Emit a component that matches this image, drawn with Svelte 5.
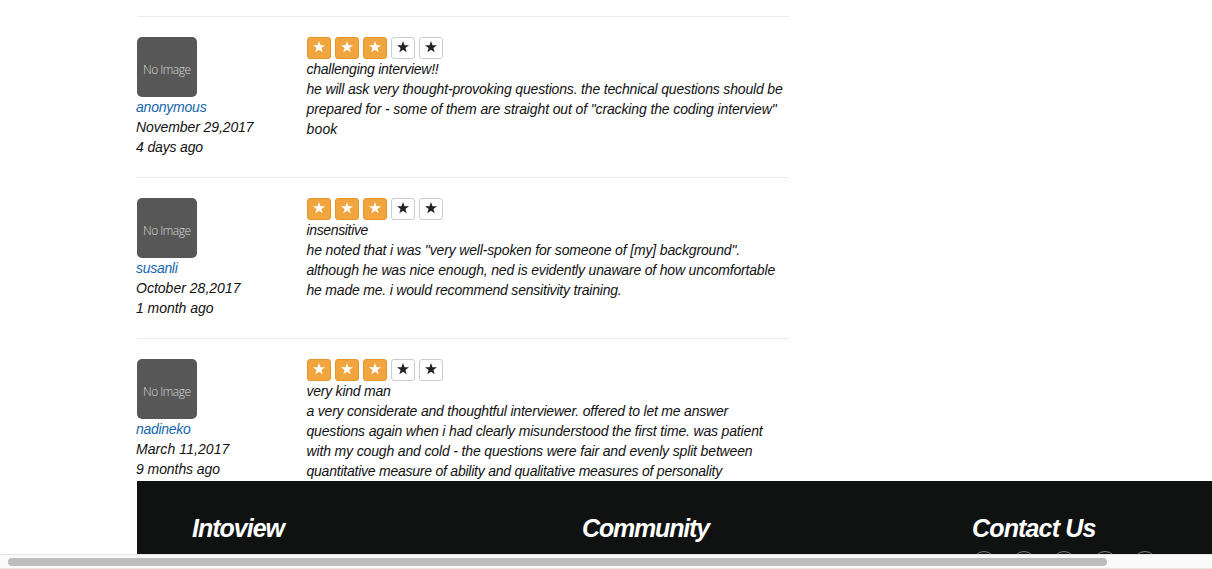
<script>
  const reviews = [
    {
      user: ['anonymous', 70.5], date: ['November 29,2017', 117.5], ago: ['4 days ago', 67], rating: 3,
      title: ['challenging interview!!', 132],
      lines: [
        ['he will ask very thought-provoking questions. the technical questions should be', 476],
        ['prepared for - some of them are straight out of "cracking the coding interview"', 470],
        ['book', 31],
      ],
    },
    {
      user: ['susanli', 41.5], date: ['October 28,2017', 104.5], ago: ['1 month ago', 77.5], rating: 3,
      title: ['insensitive', 61.5],
      lines: [
        ['he noted that i was "very well-spoken for someone of [my] background".', 433.5],
        ['although he was nice enough, ned is evidently unaware of how uncomfortable', 468.5],
        ['he made me. i would recommend sensitivity training.', 315],
      ],
    },
    {
      user: ['nadineko', 54.5], date: ['March 11,2017', 93.5], ago: ['9 months ago', 84], rating: 3,
      title: ['very kind man', 84],
      lines: [
        ['a very considerate and thoughtful interviewer. offered to let me answer', 421.5],
        ['questions again when i had clearly misunderstood the first time. was patient', 456],
        ['with my cough and cold - the questions were fair and evenly split between', 446],
        ['quantitative measure of ability and qualitative measures of personality', 415.5],
      ],
    },
  ];

  // tracks the text out or in until it fills the given width
  function fit(node, width) {
    const gap = (width - node.getBoundingClientRect().width) / node.textContent.length;
    node.style.letterSpacing = `${gap}px`;
  }
</script>

<div class="page">
  <main>
    {#each reviews as r}
      <hr />
      <div class="review">
        <div class="author">
          <div class="avatar"><span use:fit={47.5}>No Image</span></div>
          <a href="#top"><span use:fit={r.user[1]}>{r.user[0]}</span></a>
          <div><span use:fit={r.date[1]}>{r.date[0]}</span></div>
          <div><span use:fit={r.ago[1]}>{r.ago[0]}</span></div>
        </div>
        <div class="body">
          <div class="stars">
            {#each [1, 2, 3, 4, 5] as n}
              <span class="star" class:on={n <= r.rating}>
                <svg viewBox="0 0 12 12" width="12" height="12">
                  <path d="M6 0l1.5 4.2H12L8.4 6.9 9.7 11.3 6 8.7 2.3 11.3 3.6 6.9 0 4.2h4.5z" />
                </svg>
              </span>
            {/each}
          </div>
          <div><span use:fit={r.title[1]}>{r.title[0]}</span></div>
          {#each r.lines as line}
            <div><span use:fit={line[1]}>{line[0]}</span></div>
          {/each}
        </div>
      </div>
    {/each}
  </main>

  <footer>
    <section><h3><span use:fit={92}>Intoview</span></h3></section>
    <section><h3><span use:fit={127}>Community</span></h3></section>
    <section>
      <h3><span use:fit={123.5}>Contact Us</span></h3>
      <div class="social">
        {#each [1, 2, 3, 4, 5] as n}
          <i></i>
        {/each}
      </div>
    </section>
  </footer>

  <div class="scrollbar"><div class="thumb"></div></div>
</div>

<style>
  :global(body) { background: #fff; }

  .page {
    height: 569px; overflow: hidden;
    display: flex; flex-direction: column;
    font: italic 14px/20px "Liberation Sans", Arial, sans-serif;
    color: #111;
  }
  span { white-space: pre; }

  main { height: 481px; flex: none; overflow: hidden; padding: 16px 0 0 136px; box-sizing: border-box; }
  hr { width: 652px; height: 1px; margin: 0 0 20px 1px; border: 0; background: #ebebeb; }
  .review { display: flex; margin-bottom: 20px; }
  .author { width: 170px; }
  .author a { display: block; color: #1565ae; text-decoration: none; }

  .avatar {
    width: 60px; height: 60px; margin-left: 1px; border-radius: 5px;
    box-sizing: border-box; padding: 23px 0 0 6px;
    background: #575757; color: #d8d8d8;
    font: 300 12px/20px "Open Sans", sans-serif;
  }

  .body { padding-left: 0.5px; }
  .stars { display: flex; gap: 4px; height: 22px; margin-left: 0.5px; }
  .star {
    width: 24px; height: 22px; box-sizing: border-box;
    display: flex; justify-content: center; padding: 3px 1px 0 0;
    border: 1px solid #ccc; border-radius: 3px; background: #fff; fill: #222;
  }
  .star.on { background: #f0a53f; border-color: #e8952a; fill: #fff; }

  footer {
    height: 73px; flex: none; overflow: hidden;
    margin-left: 137px; padding-left: 55px; box-sizing: border-box;
    display: flex; background: #101211; color: #fff;
  }
  section { width: 390px; flex: none; }
  h3 { margin: 32px 0 0; font-size: 25px; line-height: 30px; font-weight: 700; }
  .social { display: flex; gap: 16.2px; margin-top: 8px; }
  .social i { width: 24px; height: 24px; flex: none; box-sizing: border-box; border: 1px solid #858585; border-radius: 50%; }

  .scrollbar {
    height: 15px; flex: none; box-sizing: border-box;
    border-top: 1px solid #e4e4e4; border-bottom: 1px solid #e8e8e8;
    background: #fafafa; padding: 3px 0 0 8px;
  }
  .thumb { width: 1099px; height: 8px; border-radius: 4px; background: #bcbcbc; }
</style>
